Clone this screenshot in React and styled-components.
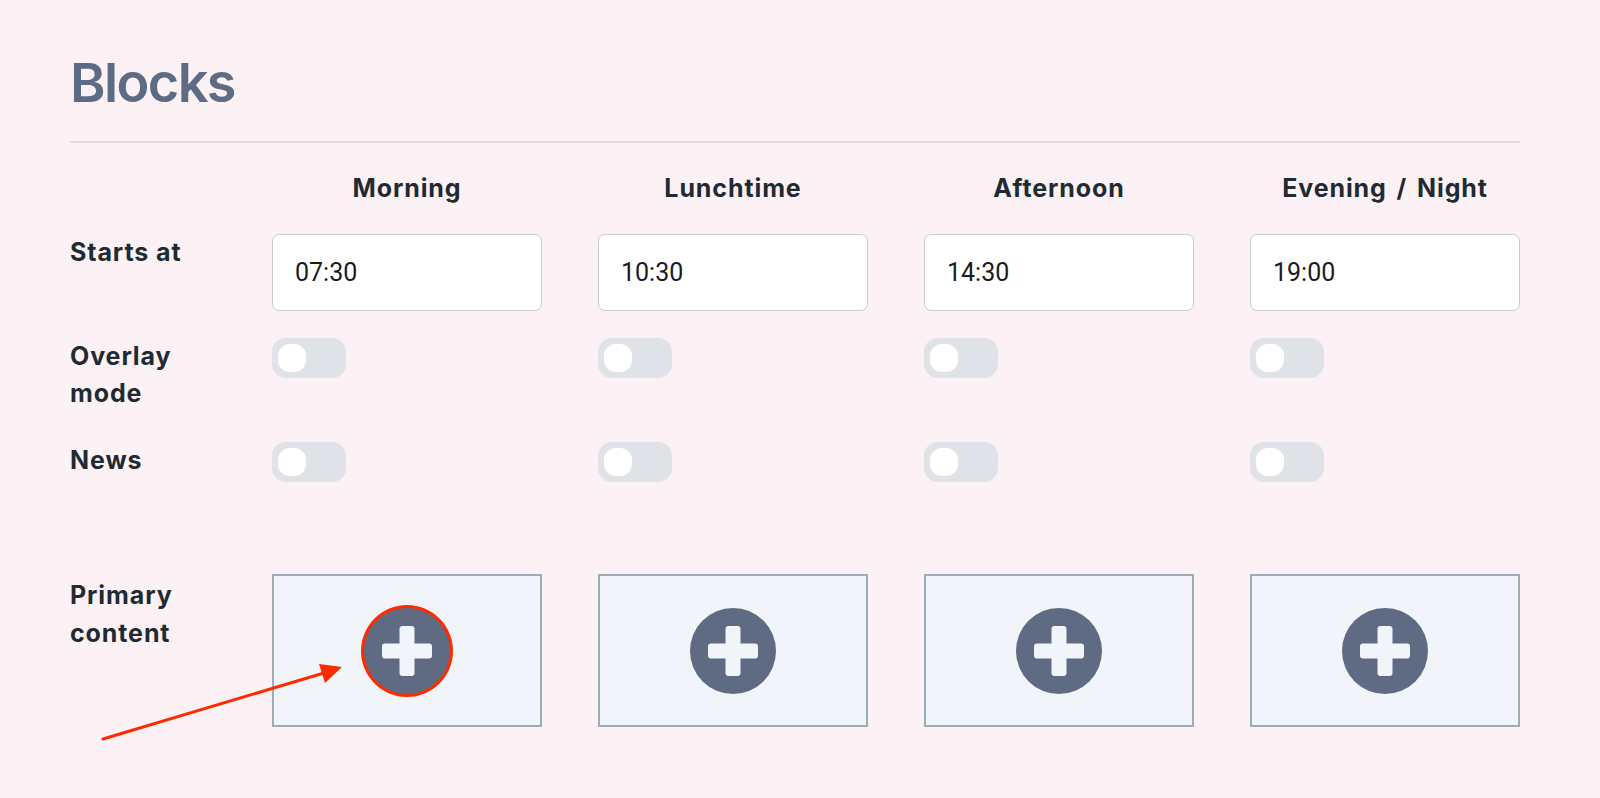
import React from 'react';
import styled, {createGlobalStyle} from 'styled-components';

const Global = createGlobalStyle`
  html, body {
    margin:0;
    padding:0;
    background:#fcf1f5;
  }
  body {
    font-family:Inter, "Open Sans", sans-serif;
    color:#1f2b33;
  }
`;

const Page = styled.div`
  width:1520px;
  padding:49px 0 0 70px;
  min-height:798px;
  box-sizing:border-box;
  position:relative;
`;

const Title = styled.h1`
  margin:0;
  font-size:54px;
  line-height:68px;
  font-weight:600;
  color:#5e6b85;
  letter-spacing:-1.6px;
`;

const Divider = styled.div`
  height:2px;
  background:#e4dadf;
  margin-top:24px;
`;

const Row = styled.div`
  display:grid;
  grid-template-columns:146px repeat(4, 270px);
  column-gap:56px;
  align-items:start;
  margin-top:${({top}) => top}px;
`;

const ColHead = styled.div`
  font-size:25px;
  line-height:30px;
  font-weight:700;
  text-align:center;
  letter-spacing:0.9px;
  word-spacing:3px;
`;

const Label = styled.div`
  font-size:25px;
  line-height:${({lh}) => lh || 37}px;
  font-weight:700;
  padding-top:${({pt}) => pt || 0}px;
  letter-spacing:0.9px;
  white-space:nowrap;
`;

const TimeInput = styled.input`
  box-sizing:border-box;
  width:270px;
  height:77px;
  border:1.5px solid #cbcbcb;
  border-radius:7px;
  background:#fff;
  padding:0 22px;
  font-family:Roboto, sans-serif;
  font-size:25px;
  color:#1b1b1b;
  outline:none;
`;

const Toggle = styled.div`
  width:74px;
  height:40px;
  border-radius:14px;
  background:#dfe2e7;
  display:flex;
  align-items:center;
  padding-left:6px;
  box-sizing:border-box;
`;

const Knob = styled.div`
  width:28px;
  height:28px;
  border-radius:12px;
  background:#fff;
`;

const ContentBox = styled.div`
  box-sizing:border-box;
  width:270px;
  height:153px;
  border:2px solid #9dadb8;
  background:#f1f4f9;
  display:flex;
  align-items:center;
  justify-content:center;
`;

const AddButton = styled.div`
  width:86px;
  height:86px;
  border-radius:50%;
  background:#5f6b82;
  position:relative;
  box-shadow:${({marked}) => marked ? '0 0 0 3px #ff2a00' : 'none'};
  &::before, &::after {
    content:'';
    position:absolute;
    left:50%;
    top:50%;
    background:#f1f4f9;
    border-radius:3px;
    transform:translate(-50%, -50%);
  }
  &::before { width:50px; height:15px; }
  &::after { width:15px; height:50px; }
`;

const Arrow = styled.svg`
  position:absolute;
  left:0;
  top:0;
  pointer-events:none;
`;

const blocks = [
  {name:'Morning', time:'07:30'},
  {name:'Lunchtime', time:'10:30'},
  {name:'Afternoon', time:'14:30'},
  {name:'Evening / Night', time:'19:00'},
];

export default function App(){
  return (
    <Page>
      <Global/>
      <Title>Blocks</Title>
      <Divider/>

      <Row top={30}>
        <div/>
        {blocks.map(b => <ColHead key={b.name}>{b.name}</ColHead>)}
      </Row>

      <Row top={31}>
        <Label lh={36}>Starts at</Label>
        {blocks.map(b => <TimeInput key={b.name} defaultValue={b.time}/>)}
      </Row>

      <Row top={27}>
        <Label>Overlay<br/>mode</Label>
        {blocks.map(b => <Toggle key={b.name}><Knob/></Toggle>)}
      </Row>

      <Row top={30}>
        <Label>News</Label>
        {blocks.map(b => <Toggle key={b.name}><Knob/></Toggle>)}
      </Row>

      <Row top={92}>
        <Label lh={38} pt={2}>Primary<br/>content</Label>
        {blocks.map((b, i) => (
          <ContentBox key={b.name}>
            <AddButton marked={i === 0}/>
          </ContentBox>
        ))}
      </Row>

      <Arrow width="400" height="798" viewBox="0 0 400 798">
        <line x1="103" y1="739" x2="324" y2="673" stroke="#ff2a00" strokeWidth="3" strokeLinecap="round"/>
        <polygon points="342,667 319,664 325,683" fill="#ff2a00"/>
      </Arrow>
    </Page>
  );
}
